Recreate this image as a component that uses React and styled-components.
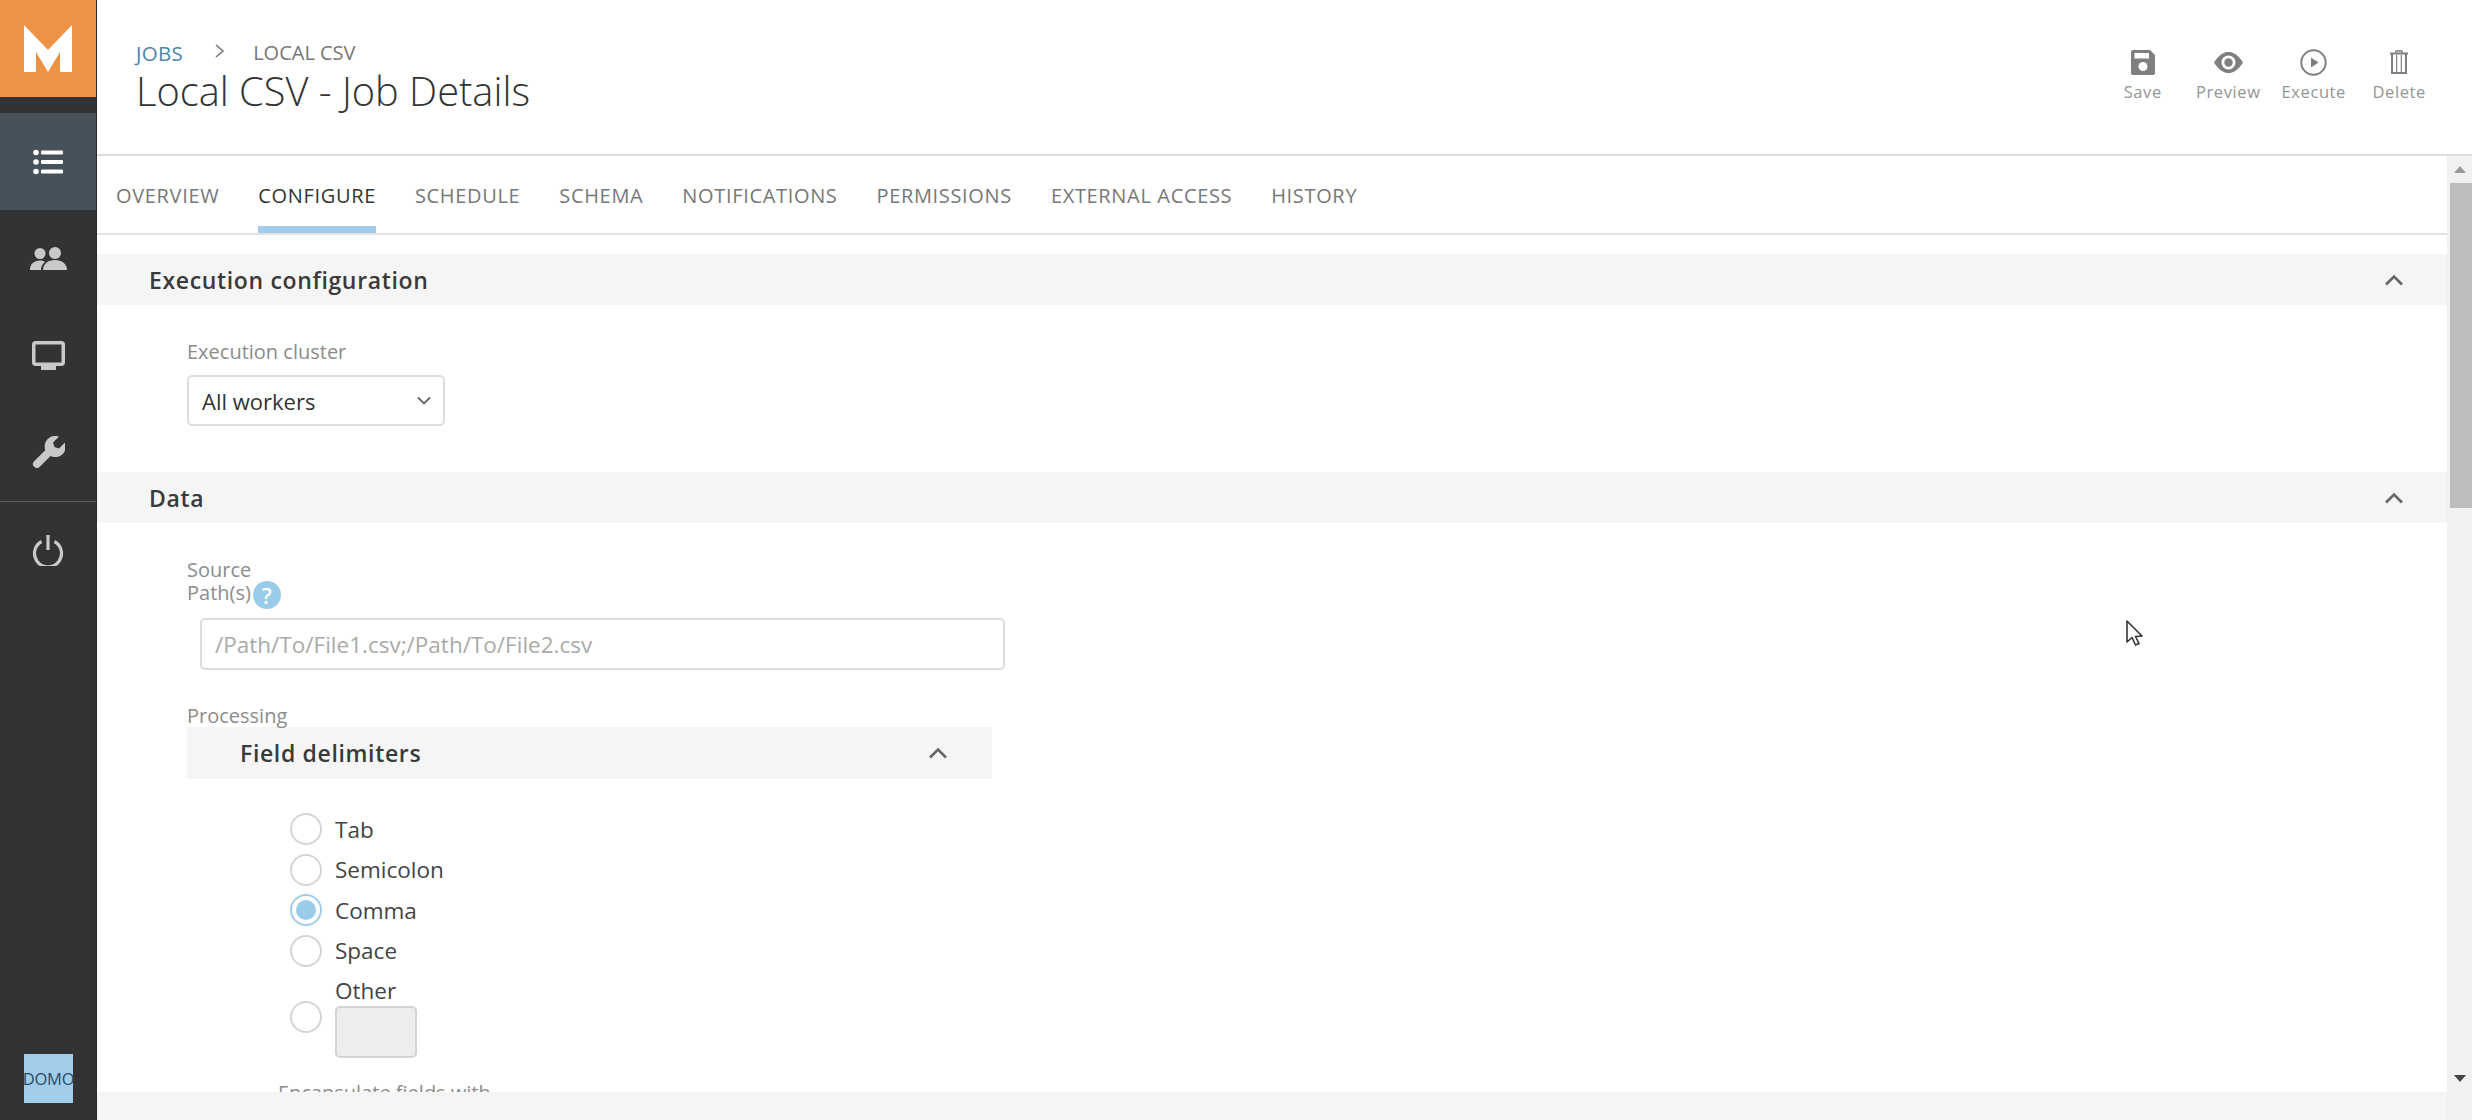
import React from 'react';
import styled, { createGlobalStyle } from 'styled-components';

const GlobalStyle = createGlobalStyle`
  html, body {
    margin: 0;
    padding: 0;
    height: 100%;
    overflow: hidden;
    background: #fff;
    font-family: "Open Sans", "Liberation Sans", sans-serif;
  }
  * { box-sizing: border-box; }
`;

const Page = styled.div`
  position: relative;
  display: flex;
  width: 2472px;
  height: 1120px;
  overflow: hidden;
`;

/* left rail */
const Sidebar = styled.aside`
  width: 97px;
  flex-shrink: 0;
  display: flex;
  flex-direction: column;
  background: #333333;
  border-right: 1px solid #2a2a2a;
`;

const LogoBox = styled.div`
  height: 97px;
  margin-bottom: 16px;
  background: #ee9345;
  display: flex;
  align-items: center;
  justify-content: center;
`;

const NavItem = styled.div`
  height: 97px;
  display: flex;
  align-items: center;
  justify-content: center;
  color: ${(p) => (p.$active ? '#ffffff' : '#c9c9c9')};
  background: ${(p) => (p.$active ? '#47515a' : 'transparent')};
`;

const NavDivider = styled.div`
  height: 1px;
  background: #5a5a5a;
`;

const DomoBox = styled.div`
  margin: auto 0 17px 24px;
  width: 49px;
  height: 49px;
  background: #a2cdea;
  color: #2d4a63;
  font-size: 16.5px;
  letter-spacing: -0.2px;
  display: flex;
  align-items: center;
  justify-content: center;
`;

const Main = styled.div`
  flex: 1;
  min-width: 0;
  display: flex;
  flex-direction: column;
`;

/* top header */
const TopBar = styled.header`
  height: 156px;
  flex-shrink: 0;
  display: flex;
  justify-content: space-between;
  padding: 0 30px 0 39px;
  border-bottom: 2px solid #dddddd;
`;

const TitleBlock = styled.div`
  padding-top: 39px;
`;

const Crumbs = styled.div`
  display: flex;
  align-items: center;
  height: 27px;
  font-size: 20px;
  text-transform: uppercase;
  color: #777777;
`;

const CrumbLink = styled.span`
  color: #4f86a8;
  font-size: 20.5px;
  letter-spacing: 0.3px;
`;

const CrumbSep = styled.svg`
  width: 12px;
  height: 16px;
  margin: -4px 27px 0 31px;
  fill: none;
  stroke: #777777;
  stroke-width: 1.6;
`;

const PageTitle = styled.h1`
  margin: 0;
  font-size: 39.8px;
  line-height: 50px;
  font-weight: 300;
  color: #333333;
`;

const Actions = styled.div`
  display: flex;
  padding-top: 44px;
`;

const Action = styled.div`
  width: 85.5px;
  display: flex;
  flex-direction: column;
  align-items: center;
  color: #7f7f7f;
`;

const ActionIcon = styled.div`
  height: 36px;
  display: flex;
  align-items: center;
  justify-content: center;
`;

const ActionLabel = styled.span`
  font-size: 16.5px;
  line-height: 24px;
  letter-spacing: 0.6px;
  color: #959595;
`;

const Body = styled.div`
  flex: 1;
  min-height: 0;
  display: flex;
`;

const Column = styled.div`
  flex: 1;
  min-width: 0;
  display: flex;
  flex-direction: column;
`;

/* tabs */
const TabBar = styled.nav`
  height: 79px;
  flex-shrink: 0;
  display: flex;
  gap: 39px;
  padding-left: 19px;
  border-bottom: 2px solid #e2e2e2;
`;

const Tab = styled.div`
  height: 77px;
  display: flex;
  align-items: center;
  padding-top: 8px;
  font-size: 20px;
  letter-spacing: 0.66px;
  text-transform: uppercase;
  color: ${(p) => (p.$active ? '#333333' : '#777777')};
  font-weight: ${(p) => (p.$active ? 500 : 400)};
  border-bottom: 7px solid ${(p) => (p.$active ? '#a2cdea' : 'transparent')};
`;

const Scroller = styled.div`
  flex: 1;
  min-height: 0;
  overflow: hidden;
  padding-top: 19px;
`;

const SectionHead = styled.div`
  height: ${(p) => (p.$sub ? '52px' : '51px')};
  display: flex;
  align-items: center;
  justify-content: space-between;
  padding: ${(p) => (p.$sub ? '0 44px 0 53px' : '0 43px 0 52px')};
  background: #f5f5f5;
  font-size: 23px;
  font-weight: 600;
  letter-spacing: 0.65px;
  color: #3a3a3a;
`;

const SectionBody = styled.div`
  padding: 35px 0 46px 90px;
`;

const FieldLabel = styled.div`
  font-size: 20px;
  line-height: 23px;
  color: #8c8c8c;
`;

const SelectBox = styled.div`
  width: 258px;
  height: 51px;
  margin-top: 12px;
  padding: 0 12px 0 13px;
  display: flex;
  align-items: center;
  justify-content: space-between;
  background: #fff;
  border: 2px solid #dddddd;
  border-radius: 5px;
  font-size: 22px;
  color: #333333;
`;

const HelpDot = styled.span`
  display: inline-flex;
  align-items: center;
  justify-content: center;
  width: 28px;
  height: 28px;
  margin-left: 2px;
  border-radius: 50%;
  background: #9bcbea;
  color: #fff;
  font-size: 22px;
  font-weight: 600;
  vertical-align: middle;
`;

const PathInput = styled.div`
  width: 805px;
  height: 52px;
  margin: 9px 0 0 13px;
  padding: 0 13px;
  display: flex;
  align-items: center;
  border: 2px solid #dddddd;
  border-radius: 5px;
  font-size: 22.5px;
  color: #aaaaaa;
`;

const SubSection = styled.div`
  width: 805px;
  margin-top: 34px;
`;

const RadioList = styled.div`
  padding: 34px 0 0 103px;
  display: flex;
  flex-direction: column;
  gap: 8.6px;
`;

const RadioRow = styled.div`
  display: flex;
  align-items: center;
  gap: 13px;
  font-size: 22.5px;
  color: #444444;
  height: 32px;
`;

const OtherRow = styled(RadioRow)`
  height: auto;
  margin-top: 1px;
`;

const RadioDot = styled.span`
  width: 32px;
  height: 32px;
  flex-shrink: 0;
  border-radius: 50%;
  border: 2px solid ${(p) => (p.$on ? '#a2cdea' : '#d5d5d5')};
  display: flex;
  align-items: center;
  justify-content: center;
  &::after {
    content: '';
    width: 20px;
    height: 20px;
    border-radius: 50%;
    background: ${(p) => (p.$on ? '#9bcbea' : 'transparent')};
  }
`;

const OtherText = styled.div`
  line-height: 30px;
`;

const OtherInput = styled.div`
  width: 82px;
  height: 52px;
  background: #eeeeee;
  border: 2px solid #d5d5d5;
  border-radius: 5px;
`;

const CutLabel = styled(FieldLabel)`
  margin: 14px 0 0 -12px;
`;

const BottomBar = styled.div`
  height: 28px;
  flex-shrink: 0;
  background: #f5f5f5;
`;

/* scrollbar next to the content */
const ScrollTrack = styled.div`
  width: 25px;
  flex-shrink: 0;
  display: flex;
  flex-direction: column;
  align-items: center;
  background: #f1f1f1;
`;

const ScrollArrow = styled.div`
  height: 27px;
  display: flex;
  align-items: center;
  justify-content: center;
`;

const ScrollThumb = styled.div`
  width: 22px;
  margin-left: 3px;
  height: 325px;
  flex-shrink: 0;
  background: #bdbdbd;
`;

const Spacer = styled.div`
  flex: 1;
`;

const CursorMark = styled.svg`
  position: absolute;
  left: 2125px;
  top: 619px;
  width: 20px;
  height: 28px;
`;

const tabs = ['Overview', 'Configure', 'Schedule', 'Schema', 'Notifications', 'Permissions', 'External access', 'History'];
const radios = ['Tab', 'Semicolon', 'Comma', 'Space'];

const Chevron = ({ color = '#666', size = 20 }) => (
  <svg width={size} height={size * 0.6} viewBox="0 0 20 12" fill="none" stroke={color} strokeWidth="2.6">
    <path d="M2 10.5 L10 2.5 L18 10.5" />
  </svg>
);

const ListIcon = () => (
  <svg width="30" height="26" viewBox="0 0 30 26" fill="currentColor">
    <circle cx="3" cy="3.5" r="2.8" />
    <circle cx="3" cy="13" r="2.8" />
    <circle cx="3" cy="22.5" r="2.8" />
    <rect x="8" y="1.5" width="22" height="4" rx="1" />
    <rect x="8" y="11" width="22" height="4" rx="1" />
    <rect x="8" y="20.5" width="22" height="4" rx="1" />
  </svg>
);

const UsersIcon = () => (
  <svg width="37" height="23" viewBox="0 0 37 23" fill="currentColor">
    <circle cx="25" cy="6" r="6" />
    <circle cx="10" cy="6.5" r="5.5" />
    <path d="M0 23 C0 17 4 13.5 10 13.5 C12 13.5 14 14 15 15 C12 17 11 20 11 23 Z" />
    <path d="M13 23 C13 17 18 13 25 13 C32 13 37 17 37 23 Z" />
  </svg>
);

const MonitorIcon = () => (
  <svg width="33" height="29" viewBox="0 0 33 29" fill="none" stroke="currentColor">
    <rect x="1.75" y="1.75" width="29.5" height="21.5" rx="2" strokeWidth="3.5" />
    <rect x="9" y="24.5" width="15" height="4.5" fill="currentColor" stroke="none" />
  </svg>
);

const WrenchIcon = () => (
  <svg width="33" height="33" viewBox="0 0 33 33">
    <path d="M27 0.6 L21 6.6 L22.5 11 L27 12.4 L33 6.4 A10.6 10.6 0 1 1 27 0.6 Z" fill="currentColor" />
    <path d="M5 28 L17 16" fill="none" stroke="currentColor" strokeWidth="8" strokeLinecap="round" />
  </svg>
);

const PowerIcon = () => (
  <svg width="32" height="31" viewBox="0 0 32 31" fill="none" stroke="currentColor" strokeWidth="3.2">
    <path d="M9.5 6.5 A13.5 13.5 0 1 0 22.5 6.5" />
    <path d="M16 0 V15" />
  </svg>
);

const SaveIcon = () => (
  <svg width="24" height="25" viewBox="0 0 24 25">
    <path d="M2 0 H19 L24 5 V23 A2 2 0 0 1 22 25 H2 A2 2 0 0 1 0 23 V2 A2 2 0 0 1 2 0 Z" fill="currentColor" />
    <rect x="3.5" y="3" width="14.5" height="5.5" fill="#fff" />
    <circle cx="12" cy="16.5" r="4.5" fill="#fff" />
  </svg>
);

const EyeIcon = () => (
  <svg width="29" height="21" viewBox="0 0 29 21">
    <path d="M0 10.5 C5 2.5 10 0 14.5 0 C19 0 24 2.5 29 10.5 C24 18.5 19 21 14.5 21 C10 21 5 18.5 0 10.5 Z" fill="currentColor" />
    <circle cx="14.5" cy="10.5" r="7" fill="#fff" />
    <circle cx="14.5" cy="10.5" r="4.2" fill="currentColor" />
  </svg>
);

const PlayIcon = () => (
  <svg width="27" height="27" viewBox="0 0 27 27">
    <circle cx="13.5" cy="13.5" r="12.2" fill="none" stroke="currentColor" strokeWidth="2" />
    <path d="M11 8.5 L18.5 13.5 L11 18.5 Z" fill="currentColor" />
  </svg>
);

const TrashIcon = () => (
  <svg width="18" height="24" viewBox="0 0 18 24" fill="none" stroke="currentColor" strokeWidth="2">
    <path d="M0 3.5 H18" />
    <path d="M6 3 V1 H12 V3" strokeWidth="1.4" />
    <path d="M2 4 V23 H16 V4" />
    <path d="M6.7 5 V22 M11.3 5 V22" strokeWidth="1.2" />
  </svg>
);

const LogoMark = () => (
  <svg width="48" height="47" viewBox="0 0 48 47" fill="#fff">
    <path d="M0 0 L24 25 L48 0 V47 H36 V27 L24 47 L12 27 V47 H0 Z" />
  </svg>
);

export default function App() {
  return (
    <Page>
      <GlobalStyle />
      <Sidebar>
        <LogoBox><LogoMark /></LogoBox>
        <NavItem $active><ListIcon /></NavItem>
        <NavItem><UsersIcon /></NavItem>
        <NavItem><MonitorIcon /></NavItem>
        <NavItem><WrenchIcon /></NavItem>
        <NavDivider />
        <NavItem><PowerIcon /></NavItem>
        <DomoBox>DOMO</DomoBox>
      </Sidebar>

      <Main>
        <TopBar>
          <TitleBlock>
            <Crumbs>
              <CrumbLink>Jobs</CrumbLink>
              <CrumbSep viewBox="0 0 12 16"><path d="M2 2 L9 8 L2 14" /></CrumbSep>
              <span>Local CSV</span>
            </Crumbs>
            <PageTitle>Local CSV - Job Details</PageTitle>
          </TitleBlock>
          <Actions>
            <Action>
              <ActionIcon><SaveIcon /></ActionIcon>
              <ActionLabel>Save</ActionLabel>
            </Action>
            <Action>
              <ActionIcon><EyeIcon /></ActionIcon>
              <ActionLabel>Preview</ActionLabel>
            </Action>
            <Action>
              <ActionIcon><PlayIcon /></ActionIcon>
              <ActionLabel>Execute</ActionLabel>
            </Action>
            <Action>
              <ActionIcon><TrashIcon /></ActionIcon>
              <ActionLabel>Delete</ActionLabel>
            </Action>
          </Actions>
        </TopBar>

        <Body>
          <Column>
            <TabBar>
              {tabs.map((t) => (
                <Tab key={t} $active={t === 'Configure'}>{t}</Tab>
              ))}
            </TabBar>
            <Scroller>
              <SectionHead>
                Execution configuration
                <Chevron />
              </SectionHead>
              <SectionBody>
                <FieldLabel>Execution cluster</FieldLabel>
                <SelectBox>
                  All workers
                  <svg width="14" height="9" viewBox="0 0 14 9" fill="none" stroke="#666" strokeWidth="1.8">
                    <path d="M1 1.5 L7 7.5 L13 1.5" />
                  </svg>
                </SelectBox>
              </SectionBody>

              <SectionHead>
                Data
                <Chevron />
              </SectionHead>
              <SectionBody>
                <FieldLabel>
                  Source<br />Path(s)<HelpDot>?</HelpDot>
                </FieldLabel>
                <PathInput>/Path/To/File1.csv;/Path/To/File2.csv</PathInput>
                <SubSection>
                  <FieldLabel>Processing</FieldLabel>
                  <SectionHead $sub>
                    Field delimiters
                    <Chevron />
                  </SectionHead>
                  <RadioList>
                    {radios.map((r) => (
                      <RadioRow key={r}>
                        <RadioDot $on={r === 'Comma'} />
                        {r}
                      </RadioRow>
                    ))}
                    <OtherRow>
                      <RadioDot />
                      <div>
                        <OtherText>Other</OtherText>
                        <OtherInput />
                      </div>
                    </OtherRow>
                    <CutLabel>Encapsulate fields with</CutLabel>
                  </RadioList>
                </SubSection>
              </SectionBody>
            </Scroller>
            <BottomBar />
          </Column>
          <ScrollTrack>
            <ScrollArrow>
              <svg width="12" height="7" viewBox="0 0 12 7" fill="#999"><path d="M0 7 L6 0 L12 7 Z" /></svg>
            </ScrollArrow>
            <ScrollThumb />
            <Spacer />
            <ScrollArrow>
              <svg width="12" height="7" viewBox="0 0 12 7" fill="#444"><path d="M0 0 L6 7 L12 0 Z" /></svg>
            </ScrollArrow>
            <BottomBar />
          </ScrollTrack>
        </Body>
      </Main>

      <CursorMark viewBox="0 0 20 28">
        <path d="M2 2 V23 L7 18.5 L10.5 26 L14 24.5 L10.5 17.5 L17 17 Z" fill="#fff" stroke="#333" strokeWidth="1.6" strokeLinejoin="round" />
      </CursorMark>
    </Page>
  );
}
